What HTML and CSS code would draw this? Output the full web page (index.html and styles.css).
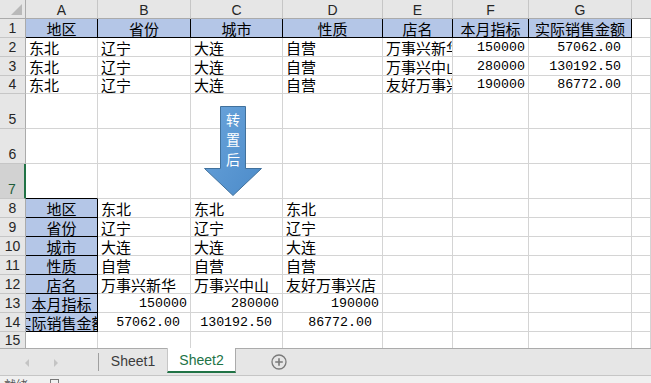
FILE: index.html
```html
<!DOCTYPE html>
<html lang="zh">
<head>
<meta charset="utf-8">
<link rel="stylesheet" href="styles.css">
</head>
<body>
<div class="app">
  <div class="sheet">
    <div class="corner"><span class="tri"></span></div>
    <div class="ch">A</div><div class="ch">B</div><div class="ch">C</div><div class="ch">D</div><div class="ch">E</div><div class="ch">F</div><div class="ch">G</div><div class="ch last"></div>

    <div class="rh">1</div>
    <div class="c h">地区</div><div class="c h">省份</div><div class="c h">城市</div><div class="c h">性质</div><div class="c h">店名</div><div class="c h">本月指标</div><div class="c h">实际销售金额</div><div class="c"></div>

    <div class="rh">2</div>
    <div class="c">东北</div><div class="c">辽宁</div><div class="c">大连</div><div class="c">自营</div><div class="c clip">万事兴新华</div><div class="c n">150000</div><div class="c n d">57062.00</div><div class="c"></div>

    <div class="rh">3</div>
    <div class="c">东北</div><div class="c">辽宁</div><div class="c">大连</div><div class="c">自营</div><div class="c clip">万事兴中山</div><div class="c n">280000</div><div class="c n d">130192.50</div><div class="c"></div>

    <div class="rh">4</div>
    <div class="c">东北</div><div class="c">辽宁</div><div class="c">大连</div><div class="c">自营</div><div class="c clip">友好万事兴店</div><div class="c n">190000</div><div class="c n d">86772.00</div><div class="c"></div>

    <div class="rh">5</div>
    <div class="c"></div><div class="c"></div><div class="c"></div><div class="c"></div><div class="c"></div><div class="c"></div><div class="c"></div><div class="c"></div>

    <div class="rh">6</div>
    <div class="c"></div><div class="c"></div><div class="c"></div><div class="c"></div><div class="c"></div><div class="c"></div><div class="c"></div><div class="c"></div>

    <div class="rh sel">7</div>
    <div class="c bb"></div><div class="c"></div><div class="c"></div><div class="c"></div><div class="c"></div><div class="c"></div><div class="c"></div><div class="c"></div>

    <div class="rh">8</div>
    <div class="c h">地区</div><div class="c">东北</div><div class="c">东北</div><div class="c">东北</div><div class="c"></div><div class="c"></div><div class="c"></div><div class="c"></div>

    <div class="rh">9</div>
    <div class="c h">省份</div><div class="c">辽宁</div><div class="c">辽宁</div><div class="c">辽宁</div><div class="c"></div><div class="c"></div><div class="c"></div><div class="c"></div>

    <div class="rh">10</div>
    <div class="c h">城市</div><div class="c">大连</div><div class="c">大连</div><div class="c">大连</div><div class="c"></div><div class="c"></div><div class="c"></div><div class="c"></div>

    <div class="rh">11</div>
    <div class="c h">性质</div><div class="c">自营</div><div class="c">自营</div><div class="c">自营</div><div class="c"></div><div class="c"></div><div class="c"></div><div class="c"></div>

    <div class="rh">12</div>
    <div class="c h">店名</div><div class="c">万事兴新华</div><div class="c">万事兴中山</div><div class="c">友好万事兴店</div><div class="c"></div><div class="c"></div><div class="c"></div><div class="c"></div>

    <div class="rh">13</div>
    <div class="c h">本月指标</div><div class="c n">150000</div><div class="c n">280000</div><div class="c n">190000</div><div class="c"></div><div class="c"></div><div class="c"></div><div class="c"></div>

    <div class="rh">14</div>
    <div class="c h clip">实际销售金额</div><div class="c n d">57062.00</div><div class="c n d">130192.50</div><div class="c n d">86772.00</div><div class="c"></div><div class="c"></div><div class="c"></div><div class="c"></div>

    <div class="rh">15</div>
    <div class="c"></div><div class="c"></div><div class="c"></div><div class="c"></div><div class="c"></div><div class="c"></div><div class="c"></div><div class="c"></div>

    <div class="arrow">
      <svg width="60" height="94" viewBox="0 0 60 94">
        <defs>
          <linearGradient id="ag" x1="0" y1="0" x2="1" y2="1">
            <stop offset="0" stop-color="#6aa4db"/>
            <stop offset="1" stop-color="#4c8bc9"/>
          </linearGradient>
        </defs>
        <polygon points="16.5,2.5 41.5,2.5 41.5,64.5 57.5,64.5 29,91.5 0.5,64.5 16.5,64.5" fill="url(#ag)" stroke="#41719c" stroke-width="1"/>
      </svg>
      <div class="arrow-text"><span>转</span><span>置</span><span>后</span></div>
    </div>
  </div>

  <div class="tabs">
    <div class="nav"><span class="navl"></span><span class="navr"></span></div>
    <div class="tab">Sheet1</div>
    <div class="tab active">Sheet2</div>
    <div class="add">
      <svg width="16" height="16" viewBox="0 0 16 16">
        <circle cx="8" cy="8" r="7" fill="none" stroke="#7a7a7a" stroke-width="1.3"/>
        <path d="M8 4.2V11.8M4.2 8H11.8" stroke="#7a7a7a" stroke-width="1.6"/>
      </svg>
    </div>
  </div>

  <div class="status"><span class="st-text">就绪</span><span class="st-icon"></span></div>
</div>
</body>
</html>
```

FILE: styles.css
```css
* { box-sizing: border-box; }
html, body { margin: 0; padding: 0; }
body {
  width: 651px;
  height: 383px;
  overflow: hidden;
  background: #ffffff;
  font-family: "Noto Sans CJK SC", "Liberation Sans", sans-serif;
}
.app {
  width: 651px;
  height: 383px;
  display: flex;
  flex-direction: column;
}
.sheet {
  position: relative;
  height: 348px;
  display: grid;
  grid-template-columns: 26px 72px 93px 92px 100px 70px 76px 103px 1fr;
  grid-template-rows: 19px 19px 19px 19px 18px 35px 35px 35px 19px 19px 19px 19px 19px 19px 19px 1fr;
  overflow: hidden;
}
.corner {
  position: relative;
  background: #e6e6e6;
  border-right: 1px solid #ababab;
  border-bottom: 1px solid #ababab;
}
.tri {
  position: absolute;
  right: 3px;
  bottom: 3px;
  width: 0;
  height: 0;
  border-left: 11px solid transparent;
  border-bottom: 11px solid #b9b9b9;
}
.ch {
  background: #e6e6e6;
  border-right: 1px solid #c6c6c6;
  border-bottom: 1px solid #ababab;
  display: flex;
  align-items: center;
  justify-content: center;
  font-family: "Liberation Sans", Arial, sans-serif;
  font-size: 14px;
  line-height: 16px;
  color: #262626;
  padding-top: 1px;
}
.ch.last { border-right: none; }
.rh {
  background: #e6e6e6;
  border-right: 1px solid #ababab;
  border-bottom: 1px solid #c6c6c6;
  display: flex;
  align-items: flex-end;
  justify-content: center;
  font-family: "Liberation Sans", Arial, sans-serif;
  font-size: 14px;
  line-height: 17px;
  color: #262626;
}
.rh.sel {
  background: #d2d2d2;
  border-right: 2px solid #217346;
  color: #1e5c3a;
}
.c {
  border-right: 1px solid #d4d4d4;
  border-bottom: 1px solid #d4d4d4;
  display: flex;
  align-items: flex-end;
  padding: 0 3px;
  white-space: nowrap;
  font-size: 15px;
  line-height: 17px;
  color: #000;
}
.c.clip { overflow: hidden; }
.c.h {
  background: #b4c6e7;
  border-right: 1px solid #000;
  border-bottom: 1px solid #000;
  justify-content: center;
  padding: 0;
}
.c.bb { border-bottom: 1px solid #000; }
.c.n {
  justify-content: flex-end;
  font-family: "Liberation Mono", "DejaVu Sans Mono", monospace;
  font-size: 13.3px;
  padding-right: 3px;
  line-height: 16px;
}
.c.n.d { padding-right: 10px; }

.arrow {
  position: absolute;
  left: 204px;
  top: 104px;
  width: 60px;
  height: 94px;
}
.arrow svg { display: block; }
.arrow-text {
  position: absolute;
  left: 17px;
  top: 8px;
  width: 24px;
  display: flex;
  flex-direction: column;
  align-items: center;
  gap: 5px;
  color: #ffffff;
  font-size: 14px;
  line-height: 15px;
}

.tabs {
  height: 28px;
  background: #e6e6e6;
  border-top: 1px solid #ababab;
  border-bottom: 1px solid #c6c6c6;
  display: flex;
  align-items: stretch;
  font-family: "Liberation Sans", Arial, sans-serif;
  font-size: 14px;
}
.nav {
  width: 99px;
  display: flex;
  align-items: center;
  position: relative;
}
.nav::after {
  content: "";
  position: absolute;
  right: 0;
  top: 4px;
  bottom: 4px;
  border-right: 1px solid #9f9f9f;
}
.navl, .navr {
  position: absolute;
  top: 10px;
  width: 0;
  height: 0;
  border-top: 4px solid transparent;
  border-bottom: 4px solid transparent;
}
.navl { left: 25px; border-right: 4px solid #c4c4c4; }
.navr { left: 54px; border-left: 4px solid #c4c4c4; }
.tab {
  width: 68px;
  display: flex;
  align-items: center;
  justify-content: center;
  color: #3b3b3b;
  padding-bottom: 2px;
}
.tab.active {
  width: 69px;
  background: #ffffff;
  color: #217346;
  border-left: 1px solid #c6c6c6;
  border-right: 1px solid #ababab;
  border-bottom: 2px solid #217346;
  margin-bottom: 2px;
  margin-top: -1px;
  padding-bottom: 0;
}
.add {
  width: 86px;
  display: flex;
  align-items: center;
  justify-content: center;
}
.status {
  flex: 1;
  background: #f0f0f0;
  overflow: hidden;
  position: relative;
  font-size: 12px;
  color: #555;
}
.st-text {
  position: absolute;
  left: 4px;
  top: 2px;
  line-height: 14px;
}
.st-icon {
  position: absolute;
  left: 50px;
  top: 3px;
  width: 9px;
  height: 7px;
  border: 1px solid #777;
  border-bottom: none;
}
```
